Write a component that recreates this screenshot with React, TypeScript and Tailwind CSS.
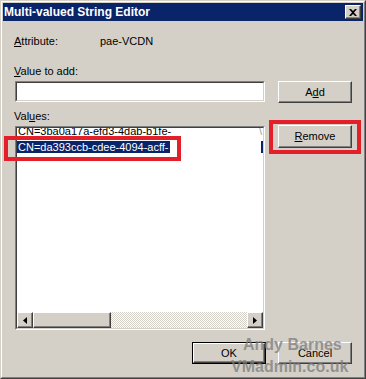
import type { ReactNode } from 'react'

const raised =
  'border border-t-white border-l-white border-r-[#404040] border-b-[#404040] bg-[#d4d0c8] shadow-[inset_-1px_-1px_#808080]'

function Key(props: { children: ReactNode }): React.JSX.Element {
  return <span className="underline underline-offset-[1px]">{props.children}</span>
}

function WinButton(props: {
  children: ReactNode
  isDefault?: boolean
  className?: string
}): React.JSX.Element {
  const { children, isDefault, className } = props
  if (isDefault) {
    return (
      <div className={`border border-black ${className ?? ''}`}>
        <div className={`flex h-full w-full items-center justify-center ${raised}`}>{children}</div>
      </div>
    )
  }
  return (
    <div className={`flex items-center justify-center ${raised} ${className ?? ''}`}>{children}</div>
  )
}

function Sunken(props: { children?: ReactNode; className?: string }): React.JSX.Element {
  return (
    <div
      className={`border border-t-[#808080] border-l-[#808080] border-r-white border-b-white ${props.className ?? ''}`}
    >
      <div className="flex h-full w-full flex-col border border-t-[#404040] border-l-[#404040] border-r-[#d4d0c8] border-b-[#d4d0c8] bg-white">
        {props.children}
      </div>
    </div>
  )
}

function Arrow(props: { dir: 'left' | 'right' }): React.JSX.Element {
  return (
    <div className={`flex h-[16px] w-[16px] shrink-0 items-center justify-center ${raised}`}>
      <svg width="4" height="7" viewBox="0 0 4 7">
        {props.dir === 'left' ? (
          <polygon points="4,0 4,7 0,3.5" fill="#000" />
        ) : (
          <polygon points="0,0 0,7 4,3.5" fill="#000" />
        )}
      </svg>
    </div>
  )
}

export default function App(): React.JSX.Element {
  return (
    <div className="relative h-[379px] w-[366px] overflow-hidden border border-t-[#d4d0c8] border-l-[#d4d0c8] border-r-[#404040] border-b-[#404040] bg-[#d4d0c8] font-['Liberation_Sans',Arial,sans-serif] text-[11px] text-black">
      <div className="flex h-full flex-col border border-t-white border-l-white border-r-[#808080] border-b-[#808080] p-px">
        {/* title bar */}
        <div className="flex h-[18px] shrink-0 items-center justify-between bg-[#0a246a] pl-[1px] pr-[2px]">
          <span className="text-[12px] font-bold leading-[18px] text-white">Multi-valued String Editor</span>
          <div className={`flex h-[14px] w-[16px] items-center justify-center ${raised}`}>
            <svg width="8" height="7" viewBox="0 0 8 7">
              <path d="M0 0h2l2 2 2-2h2L5 3.5 8 7H6L4 5 2 7H0l3-3.5z" fill="#000" />
            </svg>
          </div>
        </div>

        <div className="flex flex-col pl-[11px]">
          <div className="mt-[14px] flex h-[13px] leading-[13px]">
            <span className="w-[86px]">
              <Key>A</Key>ttribute:
            </span>
            <span>pae-VCDN</span>
          </div>

          <div className="mt-[17px] h-[13px] leading-[13px]">
            <Key>V</Key>alue to add:
          </div>

          <div className="mt-[3px] flex items-start">
            <Sunken className="ml-px h-[21px] w-[250px]" />
            <WinButton className="ml-[13px] h-[22px] w-[74px]">
              A<Key>d</Key>d
            </WinButton>
          </div>

          <div className="mt-[7px] h-[13px] leading-[13px]">
            Val<Key>u</Key>es:
          </div>

          <div className="mt-[3px] flex items-start">
            <Sunken className="ml-px h-[204px] w-[250px]">
              <div className="flex-1 overflow-hidden">
                <div className="-mt-[3px] flex h-[13px] justify-between pl-px leading-[13px]">
                  <span>CN=3ba0a17a-efd3-4dab-b1fe-</span>
                  <span className="pr-px text-[#9a9a9a]">\</span>
                </div>
                <div className="mt-[3px] flex h-[12px] justify-between leading-[12px]">
                  <span className="bg-[#0a246a] px-px text-white">CN=da393ccb-cdee-4094-acff-</span>
                  <span className="h-[12px] w-[2px] bg-[#0a246a]" />
                </div>
              </div>
              <div className="flex h-[16px] shrink-0">
                <Arrow dir="left" />
                <div className={`h-[16px] w-[78px] ${raised}`} />
                <div className="h-[16px] flex-1 bg-[repeating-conic-gradient(#d4d0c8_0%_25%,#ffffff_0%_50%)] bg-[length:2px_2px]" />
                <Arrow dir="right" />
              </div>
            </Sunken>
            <WinButton className="-mt-px ml-[13px] h-[23px] w-[74px]">
              <Key>R</Key>emove
            </WinButton>
          </div>

          <div className="mt-[12px] flex">
            <WinButton isDefault className="ml-[178px] h-[22px] w-[74px]">
              OK
            </WinButton>
            <WinButton className="ml-[12px] h-[22px] w-[74px]">Cancel</WinButton>
          </div>
        </div>
      </div>

      {/* annotation boxes */}
      <div className="absolute left-[3px] top-[135px] h-[25px] w-[177px] border-[4px] border-[#e3202a]" />
      <div className="absolute left-[268px] top-[119px] h-[34px] w-[92px] border-[4px] border-[#e3202a]" />

      {/* watermark */}
      <div className="pointer-events-none absolute left-[242px] top-[336px] text-[16px] font-bold leading-[16px] text-[#7c7c7c]/75">
        Andy Barnes
      </div>
      <div className="pointer-events-none absolute left-[230px] top-[358px] text-[16px] font-bold leading-[16px] text-[#7c7c7c]/75">
        VMadmin.co.uk
      </div>
    </div>
  )
}
